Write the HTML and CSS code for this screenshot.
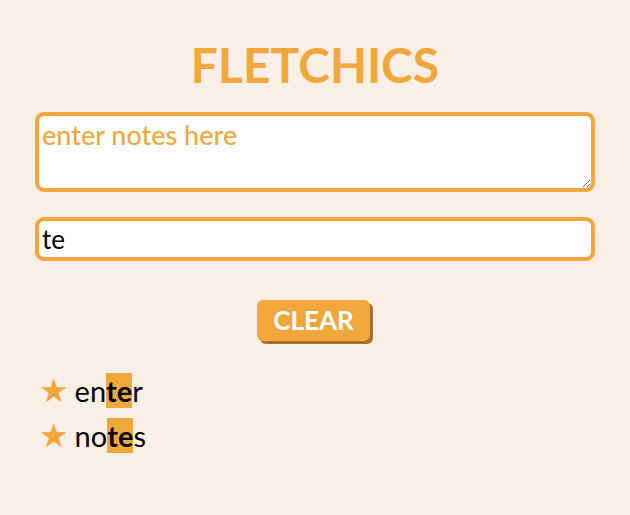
FILE: index.html
```html
<!DOCTYPE html>
<html>
<head>
<meta charset="utf-8">
<link rel="stylesheet" href="styles.css">
</head>
<body>
<div class="app">
  <h1 class="title">FLETCHICS</h1>
  <textarea class="notes" placeholder="enter notes here"></textarea>
  <input class="search" type="text" value="te">
  <div class="actions"><button class="clear">CLEAR</button></div>
  <ul class="results">
    <li class="result"><span class="star">★</span><span class="word">en<mark class="hl">te</mark>r</span></li>
    <li class="result"><span class="star">★</span><span class="word">no<mark class="hl">te</mark>s</span></li>
  </ul>
</div>
</body>
</html>
```
FILE: styles.css
```css
html, body {
  margin: 0;
  padding: 0;
  background: #f9efe6;
}
body {
  font-family: Lato, "Open Sans", sans-serif;
}
.app {
  display: flex;
  flex-direction: column;
  padding: 0 35px;
}
.title {
  margin: 36px 0 0;
  text-align: center;
  font-size: 48px;
  font-weight: 700;
  line-height: 58px;
  color: #f0a83c;
}
.notes {
  margin-top: 18px;
  box-sizing: border-box;
  height: 80px;
  border: 4px solid #f0a83c;
  border-radius: 9px;
  padding: 2px 3px;
  font-family: Lato, sans-serif;
  font-size: 27px;
  font-weight: 500;
  outline: none;
  background: #fff;
}
.notes::placeholder {
  color: #f0a83c;
  opacity: 1;
}
.search {
  margin-top: 25px;
  box-sizing: border-box;
  height: 44px;
  border: 4px solid #f0a83c;
  border-radius: 9px;
  padding: 2px 3px;
  font-family: Lato, sans-serif;
  font-size: 26px;
  color: #000;
  outline: none;
  background: #fff;
}
.actions {
  display: flex;
  justify-content: center;
  margin-top: 39px;
}
.clear {
  margin-right: 3px;
  border: none;
  background: #f0a83c;
  color: #fff;
  font-family: Lato, sans-serif;
  font-weight: 700;
  font-size: 26px;
  line-height: 31px;
  padding: 5px 16px;
  border-radius: 6px;
  box-shadow: 3px 3px 0 #a8712c;
}
.results {
  list-style: none;
  margin: 32px 0 0;
  padding: 0 0 0 4px;
  display: flex;
  flex-direction: column;
  gap: 10px;
}
.result {
  display: flex;
  align-items: baseline;
  gap: 6px;
  font-size: 29px;
  line-height: 35px;
}
.star {
  color: #f0a83c;
  font-family: "DejaVu Sans", sans-serif;
  font-size: 33px;
  line-height: 35px;
}
.hl {
  background: #f0a83c;
  color: #000;
  font-weight: 700;
  padding: 0;
}
```
